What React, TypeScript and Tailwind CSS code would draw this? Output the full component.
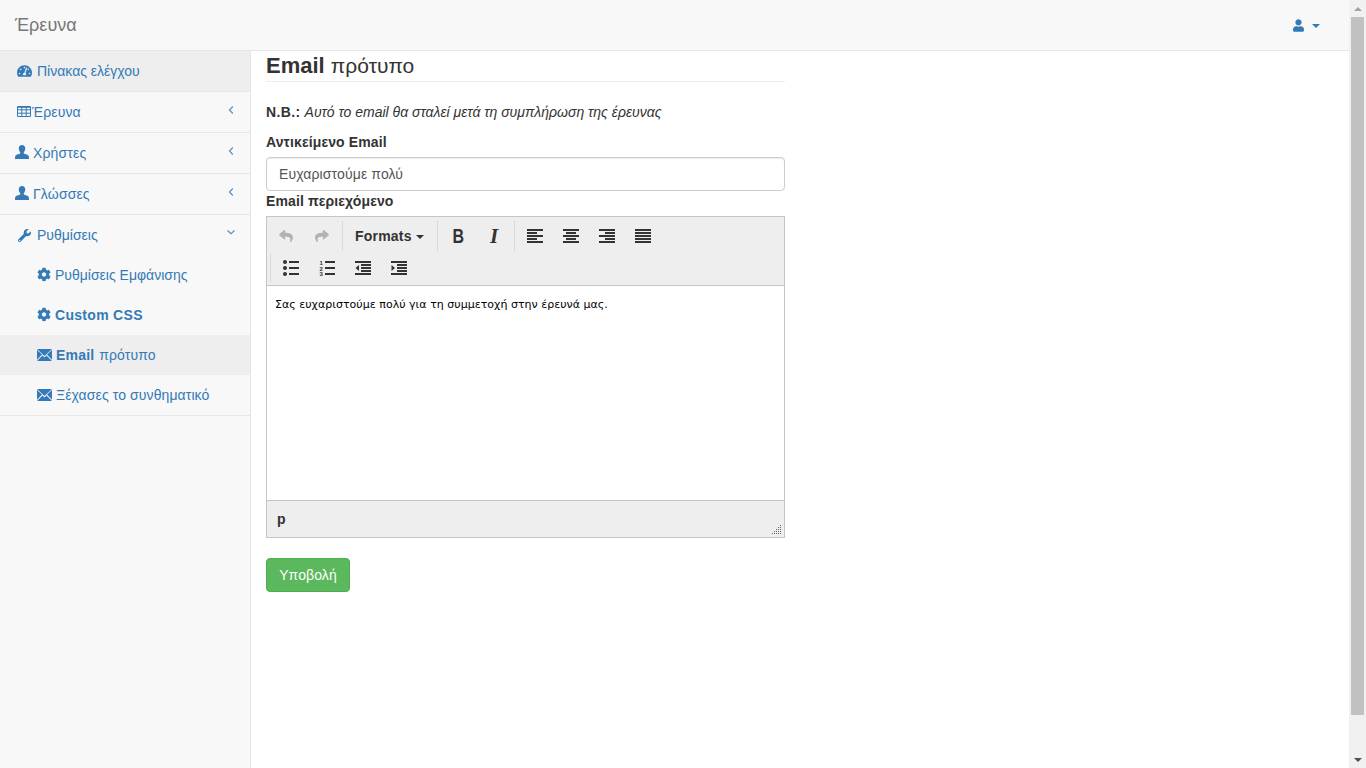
import type { ReactNode } from "react";
import { FaCog, FaReply, FaShare, FaTachometerAlt, FaUser, FaWrench } from "react-icons/fa";

const FONT = "font-['Liberation_Sans',Arial,sans-serif]";

function GlyphUser() {
  return (
    <svg viewBox="0 0 16 16" className="-mt-[2px] h-[14px] w-[14px] shrink-0" fill="currentColor">
      <path d="M8 0c2.300 0 3.700 1.700 3.700 4 0 1.700-.7 3.300-1.700 4.200v1.300c0 .7 4.500 1.300 5.500 2.800.3.500.5 1.900.5 3.700H0c0-1.800.2-3.200.5-3.700C1.500 10.800 6 10.200 6 9.500V8.200C5 7.300 4.300 5.700 4.300 4 4.300 1.700 5.700 0 8 0z" />
    </svg>
  );
}

function GlyphTable() {
  return (
    <svg viewBox="0 0 14 11" className="-mt-[1px] h-[11px] w-[14px] shrink-0" fill="none" stroke="currentColor" strokeWidth="1">
      <path d="M.5.500h13v10H.5zM.5 3.800h13M.5 7.200h13M4.800.5v10M9.200.5v10" />
      <path d="M.5 1.300h13" />
    </svg>
  );
}

function GlyphEnvelope() {
  return (
    <svg viewBox="0 0 15 12" className="-mt-[1px] h-[12px] w-[15px] shrink-0" fill="currentColor">
      <path d="M0 0h15L7.500 7z" />
      <path d="M0 1v9.800l5-5.200zM15 1v9.800l-5-5.200z" />
      <path d="M0 12l5.500-5.400 2 1.900 2-1.900L15 12z" />
    </svg>
  );
}

function Chevron({ down = false }: { down?: boolean }) {
  return (
    <svg viewBox="0 0 10 10" className={`absolute right-[14px] h-[10px] w-[10px] ${down ? "top-[12px]" : "top-[13px]"}`} fill="none" stroke="#5b8fc0" strokeWidth="1.200">
      <path d={down ? "M1.500 3.500 5 6.800 8.500 3.500" : "M6.800 1.500 3.500 5 6.800 8.500"} />
    </svg>
  );
}

function SideItem({ icon, label, cls, active, arrow }: { icon: ReactNode; label: string; cls: string; active?: boolean; arrow?: boolean }) {
  return (
    <li className="border-b border-[#e7e7e7]">
      <a className={`relative flex h-[40px] items-center text-[#337ab7] ${cls} ${active ? "bg-[#eeeeee]" : ""}`}>
        {icon}
        <span className={arrow ? "tracking-[0.15px]" : ""}>{label}</span>
        {arrow ? <Chevron /> : null}
      </a>
    </li>
  );
}

function SubItem({ icon, children, active }: { icon: ReactNode; children: ReactNode; active?: boolean }) {
  return (
    <li>
      <a className={`flex h-[40px] items-center gap-[4px] pl-[37px] text-[#337ab7] ${active ? "bg-[#eeeeee]" : ""}`}>
        {icon}
        <span>{children}</span>
      </a>
    </li>
  );
}

function Sidebar() {
  return (
    <aside className="w-[251px] shrink-0 border-r border-[#e7e7e7] bg-[#f8f8f8]">
      <ul>
        <SideItem icon={<FaTachometerAlt className="h-[14px] w-[15px] shrink-0" />} label="Πίνακας ελέγχου" cls="gap-[5px] pl-[17px]" active />
        <SideItem icon={<GlyphTable />} label="Έρευνα" cls="gap-[1px] pl-[17px]" arrow />
        <SideItem icon={<GlyphUser />} label="Χρήστες" cls="gap-[4px] pl-[15px]" arrow />
        <SideItem icon={<GlyphUser />} label="Γλώσσες" cls="gap-[4px] pl-[15px]" arrow />
        <li className="border-b border-[#e7e7e7]">
          <a className="relative flex h-[40px] items-center gap-[6px] pl-[18px] text-[#337ab7]">
            <FaWrench className="h-[13px] w-[13px] shrink-0" />
            <span>Ρυθμίσεις</span>
            <Chevron down />
          </a>
          <ul>
            <SubItem icon={<FaCog className="-mt-[1px] h-[15px] w-[14px] shrink-0" />}>Ρυθμίσεις Εμφάνισης</SubItem>
            <SubItem icon={<FaCog className="-mt-[1px] h-[15px] w-[14px] shrink-0" />}>
              <b className="tracking-[0.3px]">Custom CSS</b>
            </SubItem>
            <SubItem icon={<GlyphEnvelope />} active>
              <b className="mr-[1px] tracking-[0.2px]">Email</b> <span className="tracking-[0.1px]">πρότυπο</span>
            </SubItem>
            <SubItem icon={<GlyphEnvelope />}>
              <span className="tracking-[0.1px]">Ξέχασες το συνθηματικό</span>
            </SubItem>
          </ul>
        </li>
      </ul>
    </aside>
  );
}

// toolbar icons made of horizontal bars, [x, y, width, height]
function Bars({ rects, children }: { rects: number[][]; children?: ReactNode }) {
  return (
    <svg viewBox="0 0 16 16" className="h-[16px] w-[16px]" fill="#333333">
      {rects.map(([x, y, w, h], i) => (
        <rect key={i} x={x} y={y} width={w} height={h} />
      ))}
      {children}
    </svg>
  );
}

function ToolBtn({ children }: { children: ReactNode }) {
  return <div className="flex h-[32px] w-[36px] items-center justify-center">{children}</div>;
}

function Group({ first, children }: { first?: boolean; children: ReactNode }) {
  return (
    <div className={`mr-[2px] flex h-[30px] items-center ${first ? "" : "border-l border-[#d9d9d9] pl-[2px]"}`}>
      {children}
    </div>
  );
}

function Editor() {
  return (
    <div className="border border-[#c5c5c5]">
      <div className="h-[69px] border-b border-[#c5c5c5] bg-[#eeeeee] pt-[4px]">
        <div className="flex h-[30px] pl-[1px]">
          <Group first>
            <ToolBtn>
              <FaReply className="h-[14px] w-[14px] text-[#b3b3b3]" />
            </ToolBtn>
            <ToolBtn>
              <FaShare className="h-[14px] w-[14px] text-[#b3b3b3]" />
            </ToolBtn>
          </Group>
          <Group>
            <div className="flex h-[32px] w-[90px] items-center pl-[10px] font-bold tracking-[0.2px] text-[#333333]">
              Formats
              <span className="ml-[4px] mt-[1px] h-0 w-0 border-x-4 border-t-4 border-x-transparent border-t-[#333333]" />
            </div>
          </Group>
          <Group>
            <ToolBtn>
              <span className="scale-x-[0.8] text-[20px] font-bold text-[#333333]">B</span>
            </ToolBtn>
            <ToolBtn>
              <span className="font-['Liberation_Serif',serif] text-[21px] font-bold italic text-[#333333]">I</span>
            </ToolBtn>
          </Group>
          <Group>
            <ToolBtn>
              <Bars rects={[[0, 1, 16, 2], [0, 4, 10, 2], [0, 7, 16, 2], [0, 10, 10, 2], [0, 13, 16, 2]]} />
            </ToolBtn>
            <ToolBtn>
              <Bars rects={[[0, 1, 16, 2], [3, 4, 10, 2], [0, 7, 16, 2], [3, 10, 10, 2], [0, 13, 16, 2]]} />
            </ToolBtn>
            <ToolBtn>
              <Bars rects={[[0, 1, 16, 2], [6, 4, 10, 2], [0, 7, 16, 2], [6, 10, 10, 2], [0, 13, 16, 2]]} />
            </ToolBtn>
            <ToolBtn>
              <Bars rects={[[0, 1, 16, 2], [0, 4, 16, 2], [0, 7, 16, 2], [0, 10, 16, 2], [0, 13, 16, 2]]} />
            </ToolBtn>
          </Group>
        </div>
        <div className="mt-[2px] flex h-[30px] pl-[3px]">
          <Group>
            <ToolBtn>
              <Bars rects={[[6, 1, 10, 2], [6, 7, 10, 2], [6, 13, 10, 2]]}>
                <circle cx="2" cy="2" r="2" />
                <circle cx="2" cy="8" r="2" />
                <circle cx="2" cy="14" r="2" />
              </Bars>
            </ToolBtn>
            <ToolBtn>
              <Bars rects={[[6, 1, 10, 2], [6, 7, 10, 2], [6, 13, 10, 2]]}>
                <text x="0.500" y="4.500" fontSize="6" fontWeight="700" fontFamily="Liberation Sans">1</text>
                <text x="0.500" y="10.500" fontSize="6" fontWeight="700" fontFamily="Liberation Sans">2</text>
                <text x="0.500" y="16" fontSize="6" fontWeight="700" fontFamily="Liberation Sans">3</text>
              </Bars>
            </ToolBtn>
            <ToolBtn>
              <Bars rects={[[0, 1, 16, 2], [6, 4, 10, 2], [6, 7, 10, 2], [6, 10, 10, 2], [0, 13, 16, 2]]}>
                <path d="M4 5v6L0.500 8z" />
              </Bars>
            </ToolBtn>
            <ToolBtn>
              <Bars rects={[[0, 1, 16, 2], [6, 4, 10, 2], [6, 7, 10, 2], [6, 10, 10, 2], [0, 13, 16, 2]]}>
                <path d="M0.500 5v6L4 8z" />
              </Bars>
            </ToolBtn>
          </Group>
        </div>
      </div>
      <div className="h-[214px] bg-white pl-[8px] pt-[11px] font-['DejaVu_Sans',Verdana,sans-serif] text-[11px] leading-[16px] tracking-[0.02px] text-black">
        Σας ευχαριστούμε πολύ για τη συμμετοχή στην έρευνά μας.
      </div>
      <div className="relative h-[37px] border-t border-[#c5c5c5] bg-[#eeeeee] pl-[10px] pt-[8px] font-bold leading-[20px] text-[#333333]">
        p
        <svg viewBox="0 0 10 10" className="absolute bottom-[2px] right-[2px] h-[10px] w-[10px]" fill="#666666">
          <rect x="8" y="0" width="1" height="1" />
          <rect x="6" y="2" width="1" height="1" />
          <rect x="8" y="2" width="1" height="1" />
          <rect x="4" y="4" width="1" height="1" />
          <rect x="6" y="4" width="1" height="1" />
          <rect x="8" y="4" width="1" height="1" />
          <rect x="2" y="6" width="1" height="1" />
          <rect x="4" y="6" width="1" height="1" />
          <rect x="6" y="6" width="1" height="1" />
          <rect x="8" y="6" width="1" height="1" />
          <rect x="0" y="8" width="1" height="1" />
          <rect x="2" y="8" width="1" height="1" />
          <rect x="4" y="8" width="1" height="1" />
          <rect x="6" y="8" width="1" height="1" />
          <rect x="8" y="8" width="1" height="1" />
        </svg>
      </div>
    </div>
  );
}

function Scrollbar() {
  return (
    <div className="flex h-screen w-[17px] shrink-0 flex-col items-center bg-[#f1f1f1]">
      <div className="flex h-[17px] items-center justify-center">
        <span className="h-0 w-0 border-x-[4px] border-b-[4px] border-x-transparent border-b-[#a3a3a3]" />
      </div>
      <div className="h-[698px] w-[13px] bg-[#c1c1c1]" />
      <div className="flex-1" />
      <div className="flex h-[17px] items-center justify-center">
        <span className="h-0 w-0 border-x-[4px] border-t-[4px] border-x-transparent border-t-[#505050]" />
      </div>
    </div>
  );
}

export default function App() {
  return (
    <div className={`flex h-screen overflow-hidden bg-white text-[14px] leading-[20px] text-[#333333] ${FONT}`}>
      <div className="flex min-w-0 flex-1 flex-col">
        <nav className="flex h-[51px] shrink-0 items-center justify-between border-b border-[#e7e7e7] bg-[#f8f8f8] pl-[15px] pr-[29px]">
          <span className="text-[18px] text-[#777777]">Έρευνα</span>
          <div className="flex items-center gap-[8px] text-[#337ab7]">
            <FaUser className="h-[13px] w-[11px]" />
            <span className="mt-[1px] h-0 w-0 border-x-[4px] border-t-[4px] border-x-transparent border-t-[#337ab7]" />
          </div>
        </nav>
        <div className="flex min-h-0 flex-1">
          <Sidebar />
          <main className="px-[15px]">
            <div className="w-[519px]">
              <h3 className="h-[31px] border-b border-[#eeeeee] text-[22px] leading-[30px]">
                <b>Email</b> <span className="text-[21px]">πρότυπο</span>
              </h3>
              <p className="mt-[20px]">
                <b className="tracking-[0.4px]">N.B.:</b> <i>Αυτό το email θα σταλεί μετά τη συμπλήρωση της έρευνας</i>
              </p>
              <label className="mt-[10px] block font-bold tracking-[0.12px]">Αντικείμενο Email</label>
              <input
                readOnly
                value="Ευχαριστούμε πολύ"
                className="mt-[5px] block h-[34px] w-full rounded-[4px] border border-[#cccccc] bg-white px-[12px] text-[14px] tracking-[0.12px] text-[#555555] shadow-[inset_0_1px_1px_rgba(0,0,0,0.075)] outline-none"
              />
              <label className="block font-bold tracking-[0.12px]">Email περιεχόμενο</label>
              <div className="mt-[5px]">
                <Editor />
              </div>
              <button
                type="button"
                className="mt-[20px] h-[34px] w-[84px] rounded-[4px] border border-[#4cae4c] bg-[#5cb85c] text-[14px] tracking-[0.1px] text-white"
              >
                Υποβολή
              </button>
            </div>
          </main>
        </div>
      </div>
      <Scrollbar />
    </div>
  );
}
